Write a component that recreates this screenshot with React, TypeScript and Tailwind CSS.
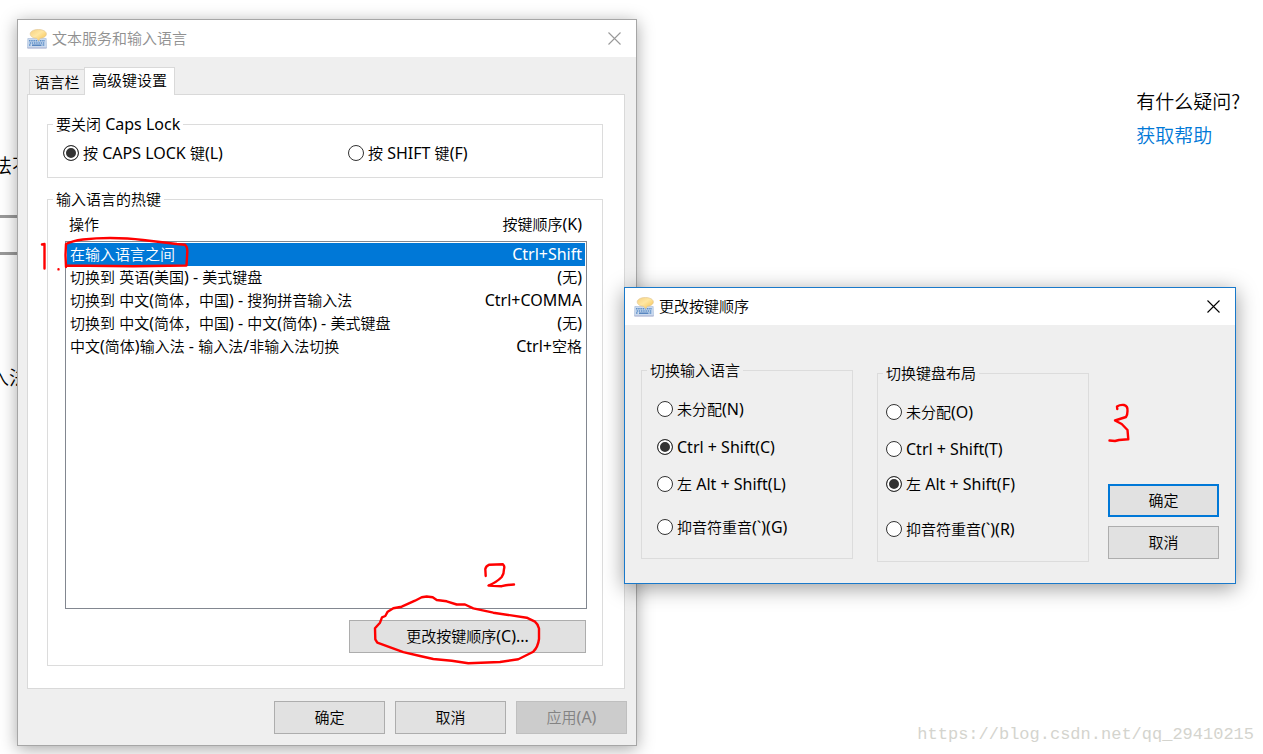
import type { ReactNode } from "react";

const FONT = "font-['Noto_Sans','Noto_Sans_CJK_SC',sans-serif]";
const CJK = "font-['Noto_Sans_CJK_SC',sans-serif]";

const hotkeys = [
  { action: "在输入语言之间", keys: "Ctrl+Shift" },
  { action: "切换到 英语(美国) - 美式键盘", keys: "(无)" },
  { action: "切换到 中文(简体，中国) - 搜狗拼音输入法", keys: "Ctrl+COMMA" },
  { action: "切换到 中文(简体，中国) - 中文(简体) - 美式键盘", keys: "(无)" },
  { action: "中文(简体)输入法 - 输入法/非输入法切换", keys: "Ctrl+空格" },
];

// Latin runs are set one pixel larger than the Chinese text around them.
function Mixed({ text }: { text: string }) {
  return (
    <span className="whitespace-pre">
      {text.split(/([\x20-\x7e]+)/).map((run, i) =>
        i % 2 === 1 ? (
          <span key={i} className="text-[16px] font-normal leading-5">
            {run}
          </span>
        ) : (
          run
        ),
      )}
    </span>
  );
}

function KeyboardIcon() {
  return (
    <svg viewBox="0 0 20 20" className="size-5 shrink-0" aria-hidden="true">
      <defs>
        <linearGradient id="balloon" x1="0" y1="0" x2="1" y2="1">
          <stop offset="0" stopColor="#f6d080" />
          <stop offset="0.45" stopColor="#ffe7a3" />
          <stop offset="1" stopColor="#f5c04a" />
        </linearGradient>
      </defs>
      <path d="M0.800 9.500H19.200L19.500 17.500V19H0.500V17.500Z" fill="#cbdaee" stroke="#a5bbd8" strokeWidth="0.6" />
      <path d="M0.500 19H19.500" stroke="#b1b6d2" strokeWidth="1" />
      <path d="M2 11.700H18M2.600 13.900H18M2 16H4M15.500 16H18" stroke="#5e90c9" strokeWidth="1.5" strokeDasharray="1.500 0.700" />
      <path d="M5 16.200H14.500" stroke="#4a7dba" strokeWidth="1.4" />
      <path
        d="M11.300 0.500C16 0.500 19.400 2.400 19.400 4.900C19.400 7.300 16.700 9 13.200 9.300L11.800 11.800L9.500 9.300C5.800 9 3.200 7.300 3.200 4.900C3.200 2.400 6.600 0.500 11.300 0.500Z"
        fill="url(#balloon)"
        stroke="#dfc594"
        strokeWidth="0.6"
      />
    </svg>
  );
}

function TitleBar({ title, active }: { title: string; active: boolean }) {
  return (
    <header className="flex h-[37px] items-center justify-between bg-white pl-[9px] pr-[14px]">
      <div className="flex items-center gap-[5px]">
        <KeyboardIcon />
        <h2 className={active ? "font-[350] text-black" : "font-[350] text-[#909090]"}>{title}</h2>
      </div>
      <button type="button" aria-label="关闭" className={active ? "text-black" : "text-[#999]"}>
        <svg viewBox="0 0 14 14" className="size-[14px]" fill="none" stroke="currentColor" strokeWidth="1.1">
          <path d="M0.500 0.500L12.500 12.500M12.500 0.500L0.500 12.500" />
        </svg>
      </button>
    </header>
  );
}

function Group({ title, className, children }: { title: string; className: string; children: ReactNode }) {
  return (
    <fieldset className={`border border-[#dcdcdc] ${className}`}>
      <legend className="ml-[5px] px-[3px] leading-5">
        <Mixed text={title} />
      </legend>
      {children}
    </fieldset>
  );
}

function Radio({
  name,
  label,
  checked = false,
  className = "",
}: {
  name: string;
  label: string;
  checked?: boolean;
  className?: string;
}) {
  return (
    <label className={`flex h-5 items-center gap-1 whitespace-nowrap ${className}`}>
      <input
        type="radio"
        name={name}
        defaultChecked={checked}
        className="size-4 shrink-0 appearance-none rounded-full border border-[#333] bg-white checked:bg-[#333] checked:shadow-[inset_0_0_0_2px_white]"
      />
      <Mixed text={label} />
    </label>
  );
}

function PushButton({
  label,
  className = "w-[111px]",
  primary = false,
  disabled = false,
}: {
  label: string;
  className?: string;
  primary?: boolean;
  disabled?: boolean;
}) {
  const look = disabled
    ? "border border-[#bfbfbf] bg-[#ccc] text-[#838383]"
    : primary
      ? "border-2 border-[#0078d7] bg-[#e1e1e1]"
      : "border border-[#adadad] bg-[#e1e1e1]";
  return (
    <button type="button" disabled={disabled} className={`h-[33px] ${look} ${className}`}>
      <Mixed text={label} />
    </button>
  );
}

function TextServicesWindow() {
  return (
    <section className="absolute left-[17px] top-[19px] w-[620px] border border-[#a6a6a6] bg-[#efefef] shadow-[0_3px_16px_rgba(0,0,0,0.35)]">
      <TitleBar title="文本服务和输入语言" active={false} />
      <div className="px-[9px] pb-[11px] pt-[10px]">
        <div role="tablist" className="flex items-end pl-[2px]">
          <button
            type="button"
            role="tab"
            aria-selected="false"
            className="h-[25px] w-[55px] border border-b-0 border-r-0 border-[#d9d9d9]"
          >
            语言栏
          </button>
          <button
            type="button"
            role="tab"
            aria-selected="true"
            className="relative -mb-px h-[28px] w-[91px] border border-b-0 border-[#d9d9d9] bg-white pb-[2px]"
          >
            高级键设置
          </button>
        </div>
        <div role="tabpanel" className="mr-[2px] border border-[#d9d9d9] bg-white pb-[22px] pl-[19px] pr-[21px] pt-[19px]">
          <Group title="要关闭 Caps Lock" className="pb-[14px]">
            <div className="grid grid-cols-[285px_1fr] pl-[15px] pt-[9px]">
              <Radio name="caps" label="按 CAPS LOCK 键(L)" checked />
              <Radio name="caps" label="按 SHIFT 键(F)" />
            </div>
          </Group>
          <Group title="输入语言的热键" className="mt-[11px] pb-3">
            <div className="pl-[17px] pr-[15px] pt-[5px]">
              <table className="block">
                <thead className="block">
                  <tr className="flex h-[27px] justify-between pl-1 pr-[5px] leading-5">
                    <th className="font-[350]">操作</th>
                    <th className="font-[350]">
                      <Mixed text="按键顺序(K)" />
                    </th>
                  </tr>
                </thead>
                <tbody className="block h-[368px] border border-[#828790] p-px">
                  {hotkeys.map((row, i) => (
                    <tr
                      key={row.action}
                      className={
                        i === 0
                          ? "flex h-[23px] items-center justify-between bg-[#0078d7] px-[3px] text-white"
                          : "flex h-[23px] items-center justify-between px-[3px]"
                      }
                    >
                      <td>
                        <Mixed text={row.action} />
                      </td>
                      <td>
                        <Mixed text={row.keys} />
                      </td>
                    </tr>
                  ))}
                </tbody>
              </table>
              <div className="mt-[11px] flex justify-end pr-px">
                <PushButton className="w-[237px]" label="更改按键顺序(C)..." />
              </div>
            </div>
          </Group>
        </div>
        <footer className="mt-3 flex justify-end gap-[10px]">
          <PushButton label="确定" />
          <PushButton label="取消" />
          <PushButton label="应用(A)" disabled />
        </footer>
      </div>
    </section>
  );
}

function KeySequenceWindow() {
  return (
    <section className="absolute left-[624px] top-[287px] w-[612px] border border-[#1979ca] bg-[#efefef] shadow-[0_4px_20px_rgba(0,0,0,0.4)]">
      <TitleBar title="更改按键顺序" active />
      <div className="flex items-start px-4 pb-[21px] pt-[35px]">
        <Group title="切换输入语言" className="w-[212px] pb-[21px]">
          <div className="flex flex-col pl-[15px] pt-[19px]">
            <Radio name="lang" label="未分配(N)" />
            <Radio name="lang" label="Ctrl + Shift(C)" checked className="mt-[18px]" />
            <Radio name="lang" label="左 Alt + Shift(L)" className="mt-[17px]" />
            <Radio name="lang" label="抑音符重音(`)(G)" className="mt-[23px]" />
          </div>
        </Group>
        <Group title="切换键盘布局" className="ml-6 mt-[3px] w-[212px] pb-[22px]">
          <div className="flex flex-col pl-[8px] pt-[19px]">
            <Radio name="layout" label="未分配(O)" />
            <Radio name="layout" label="Ctrl + Shift(T)" className="mt-[17px]" />
            <Radio name="layout" label="左 Alt + Shift(F)" checked className="mt-[15px]" />
            <Radio name="layout" label="抑音符重音(`)(R)" className="mt-[25px]" />
          </div>
        </Group>
        <div className="mb-[3px] ml-auto flex flex-col gap-[9px] self-end">
          <PushButton label="确定" primary />
          <PushButton label="取消" />
        </div>
      </div>
    </section>
  );
}

function PenMarks() {
  return (
    <svg
      className="pointer-events-none absolute left-0 top-0 h-[754px] w-[1263px]"
      viewBox="0 0 1263 754"
      fill="none"
      stroke="#ff0000"
      strokeWidth="2.4"
      strokeLinecap="round"
      strokeLinejoin="round"
      aria-hidden="true"
    >
      <path d="M42 244.5L44.5 244L44.5 268.5M58.5 269.3V269.4" />
      <path d="M66 267L65.5 255L66 244Q72 241 83 239.5Q96 238 110 238Q128 238 143 240L177 244L185 244.7Q187.500 247 187.300 252L186.500 265.500L133 266.300L66 265.500" />
      <path d="M485.700 576L485.300 569Q486 566 489.300 564.700L503 564.300Q505 566 504 569Q504 574 501.700 577Q497 582 488.500 585.500L501.700 586.200Q508 584.500 514 584.500" />
      <path d="M421.700 597.300L426.700 596.500L432.700 597.300L436.700 600L446.700 601.300L456.700 604.500H465L473.300 608.300L493.300 612.700L526.700 617.700L535 621.700Q538 624 539 628.500V639Q538 647 533.300 651.700L518.300 659.300L500 662L468.300 663.300L451.700 660.700L433.300 659L420 656L403.300 652.200L377.300 642.700L375.300 639.300L375 628.300L380 622.700L382 617.300L385.300 616L387.700 611.700L393.300 608.300L401.700 606.700L415 600.700Z" />
      <path d="M1117.300 409L1117 406.500Q1120 404.500 1124 405Q1128 406 1127.500 411Q1127.500 415 1126 417L1115 420.500L1121.700 424L1127.500 430L1128.300 439.300L1119 440L1115 441L1109.500 440.500" />
    </svg>
  );
}

export default function App() {
  return (
    <main className={`relative min-h-screen overflow-hidden bg-white text-[15px] font-[350] text-black ${FONT}`}>
      <div className={`flex justify-between text-[19px] ${CJK}`}>
        <div className="w-5 overflow-hidden whitespace-nowrap pt-[152px]">
          <p className="-ml-[7px] leading-[26px]">法不</p>
          <div className="mt-[37px] h-10 border-y-[3px] border-[#999]" />
          <p className="-ml-[10px] mt-[109px] leading-[26px]">入法</p>
        </div>
        <aside className="pr-[23px] pt-[84px] leading-[34px]">
          <p>有什么疑问?</p>
          <a href="#help" className="text-[#0078d7]">
            获取帮助
          </a>
        </aside>
      </div>
      <TextServicesWindow />
      <KeySequenceWindow />
      <PenMarks />
      <p className="absolute bottom-[7px] right-[9px] font-['Liberation_Mono',monospace] text-[17px] font-normal leading-6 text-[#d4d4ce]">
        https://blog.csdn.net/qq_29410215
      </p>
    </main>
  );
}
